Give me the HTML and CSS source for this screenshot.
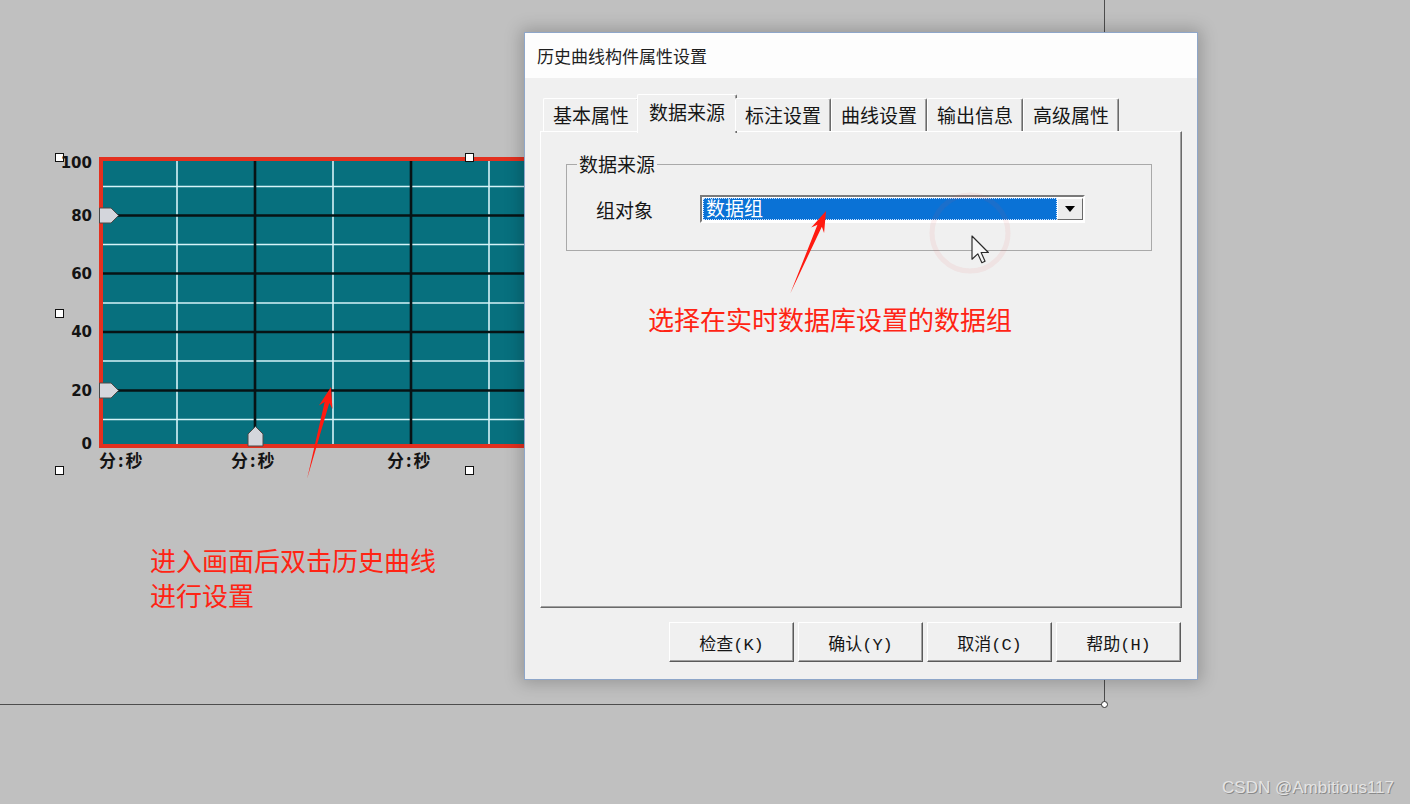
FILE: index.html
```html
<!DOCTYPE html>
<html lang="zh-CN">
<head>
<meta charset="utf-8">
<title>历史曲线构件属性设置</title>
<link rel="stylesheet" href="styles.css">
</head>
<body>
<div class="desktop">
  <div class="frame"></div>
  <div class="frame-knob"></div>

  <svg class="chart" width="540" height="500" viewBox="0 0 540 500">
    <rect x="101" y="159" width="500" height="287" fill="#07707e"/>
    <g stroke="#d6f3f8" stroke-width="1.6">
      <line x1="103" x2="540" y1="186.5" y2="186.5"/>
      <line x1="103" x2="540" y1="244.5" y2="244.5"/>
      <line x1="103" x2="540" y1="303" y2="303"/>
      <line x1="103" x2="540" y1="361" y2="361"/>
      <line x1="103" x2="540" y1="419.5" y2="419.5"/>
      <line x1="177" x2="177" y1="161" y2="444"/>
      <line x1="333" x2="333" y1="161" y2="444"/>
      <line x1="489" x2="489" y1="161" y2="444"/>
    </g>
    <g stroke="#071315" stroke-width="2.6">
      <line x1="103" x2="540" y1="215.5" y2="215.5"/>
      <line x1="103" x2="540" y1="273.5" y2="273.5"/>
      <line x1="103" x2="540" y1="332" y2="332"/>
      <line x1="103" x2="540" y1="390.5" y2="390.5"/>
      <line x1="255" x2="255" y1="161" y2="444"/>
      <line x1="411" x2="411" y1="161" y2="444"/>
    </g>
    <rect x="101" y="159" width="500" height="287" fill="none" stroke="#e3301f" stroke-width="4"/>
    <g fill="#d4d6dc" stroke="#4a4a4a" stroke-width="1">
      <polygon points="99.5,208 111,208 118.5,215.5 111,223 99.5,223"/>
      <polygon points="99.5,383 111,383 118.5,390.5 111,398 99.5,398"/>
      <polygon points="248,446 248,434 255.5,426.5 263,434 263,446"/>
    </g>
    <g fill="#fff" stroke="#111" stroke-width="1">
      <rect x="55.5" y="153.5" width="8" height="8"/>
      <rect x="465.5" y="153.5" width="8" height="8"/>
      <rect x="55.5" y="309.5" width="8" height="8"/>
      <rect x="55.5" y="466.5" width="8" height="8"/>
      <rect x="465.5" y="466.5" width="8" height="8"/>
    </g>
    <g class="ylabels" text-anchor="end">
      <text x="92" y="168">100</text>
      <text x="92" y="221">80</text>
      <text x="92" y="279">60</text>
      <text x="92" y="337">40</text>
      <text x="92" y="396">20</text>
      <text x="92" y="449">0</text>
    </g>
    <g class="xlabels">
      <text x="99" y="467">分:秒</text>
      <text x="231" y="467">分:秒</text>
      <text x="387" y="467">分:秒</text>
    </g>
  </svg>

  <div class="dialog">
    <div class="titlebar">历史曲线构件属性设置</div>
    <div class="dlg-body">
      <div class="tabs">
        <div class="tab">基本属性</div>
        <div class="tab active">数据来源</div>
        <div class="tab">标注设置</div>
        <div class="tab">曲线设置</div>
        <div class="tab">输出信息</div>
        <div class="tab">高级属性</div>
      </div>
      <div class="panel">
        <fieldset class="group">
          <legend>数据来源</legend>
          <div class="field-row">
            <span class="field-label">组对象</span>
            <div class="combo">
              <div class="combo-value">数据组</div>
              <div class="combo-btn">
                <svg width="10" height="6" viewBox="0 0 10 6"><polygon points="0,0 10,0 5,6" fill="#000"/></svg>
              </div>
            </div>
          </div>
        </fieldset>
      </div>
      <div class="buttons">
        <button class="btn">检查(K)</button>
        <button class="btn">确认(Y)</button>
        <button class="btn">取消(C)</button>
        <button class="btn">帮助(H)</button>
      </div>
    </div>
  </div>

  <div class="note note-left">进入画面后双击历史曲线<br>进行设置</div>
  <div class="note note-right">选择在实时数据库设置的数据组</div>

  <svg class="overlay" width="1410" height="804" viewBox="0 0 1410 804">
    <circle cx="970" cy="233" r="38" fill="none" stroke="rgba(235,80,80,0.08)" stroke-width="5"/>
    <g fill="#ff1a10">
      <polygon transform="translate(331,387) rotate(14.6)" points="0,0 7,21 2.4,16 0,95 -2.4,16 -7,21"/>
      <polygon transform="translate(826,211) rotate(23.4)" points="0,0 7,21 2.4,16 0,90 -2.4,16 -7,21"/>
    </g>
    <path transform="translate(972,236) scale(1.45)" d="M0,0 L0,16 L4,12.3 L6.8,18.4 L9,17.4 L6.3,11.4 L11.3,11.4 Z" fill="#f6f6f6" stroke="#2a2a2a" stroke-width="0.8" stroke-linejoin="round"/>
  </svg>

  <div class="watermark">CSDN @Ambitious117</div>
</div>
</body>
</html>
```

FILE: styles.css
```css
* { box-sizing: border-box; }

html, body {
  margin: 0;
  padding: 0;
}

body {
  width: 1410px;
  height: 804px;
  overflow: hidden;
  background: #c0c0c0;
  font-family: "Noto Sans CJK SC", "Liberation Sans", sans-serif;
}

.desktop {
  position: relative;
  width: 1410px;
  height: 804px;
  background: #c0c0c0;
}

.frame {
  position: absolute;
  left: -1px;
  top: -1px;
  width: 1106px;
  height: 706px;
  border-right: 1px solid #4d4d4d;
  border-bottom: 1px solid #4d4d4d;
}

.frame-knob {
  position: absolute;
  left: 1101px;
  top: 701px;
  width: 7px;
  height: 7px;
  border-radius: 50%;
  background: #fff;
  border: 1px solid #333;
}

.chart {
  position: absolute;
  left: 0;
  top: 0;
}

.ylabels text {
  font-family: "DejaVu Sans", sans-serif;
  font-weight: bold;
  font-size: 15px;
  fill: #141414;
}

.xlabels text {
  font-family: "Noto Sans CJK SC", sans-serif;
  font-weight: bold;
  font-size: 17px;
  letter-spacing: 2px;
  fill: #141414;
}

/* dialog */
.dialog {
  position: absolute;
  left: 524px;
  top: 32px;
  width: 674px;
  height: 648px;
  border: 1px solid #8ea6c9;
  box-shadow: 0 0 16px 3px rgba(0, 0, 0, 0.22);
  display: flex;
  flex-direction: column;
  background: #f0f0f0;
}

.titlebar {
  height: 45px;
  background: #fdfdfd;
  padding-left: 12px;
  font-size: 17px;
  line-height: 45px;
  color: #1e1e1e;
}

.dlg-body {
  flex: 1;
  display: flex;
  flex-direction: column;
  padding: 16px 15px 17px;
  background: #f0f0f0;
}

.tabs {
  position: relative;
  z-index: 1;
  display: flex;
  align-items: flex-end;
  height: 37px;
  padding-left: 3px;
}

.tab {
  height: 33px;
  padding: 0 9px;
  font-size: 19px;
  line-height: 31px;
  color: #161616;
  background: #f0f0f0;
  border-top: 1px solid #fff;
  border-left: 1px solid #fff;
  border-right: 1px solid #6a6a6a;
  box-shadow: inset -1px 0 #a0a0a0;
  border-radius: 2px 2px 0 0;
  white-space: nowrap;
}

.tab.active {
  height: 39px;
  margin: 0 -2px -2px;
  padding: 0 11px;
  line-height: 33px;
}

.panel {
  flex: 1;
  background: #f0f0f0;
  border: 1px solid;
  border-color: #fff #6a6a6a #6a6a6a #fff;
  box-shadow: inset -1px -1px #a0a0a0;
}

.group {
  margin: 22px 29px 0 25px;
  padding: 21px 0 27px 10px;
  border: 1px solid #a9a9a9;
  min-width: 0;
}

.group legend {
  padding: 0 2px;
  font-size: 19px;
  line-height: 20px;
  color: #161616;
}

.field-row {
  display: flex;
  align-items: center;
  margin-left: 19px;
  height: 28px;
}

.field-label {
  width: 104px;
  font-size: 19px;
  color: #161616;
}

.combo {
  width: 385px;
  height: 28px;
  display: flex;
  padding: 1px 0 1px 1px;
  background: #fff;
  border: 2px solid;
  border-color: #7a7a7a #fff #fff #7a7a7a;
}

.combo-value {
  flex: 1;
  background: #0a72d6;
  color: #fff;
  font-size: 19px;
  line-height: 20px;
  padding-left: 3px;
  outline: 1px dotted #cfe3ff;
  outline-offset: -1px;
}

.combo-btn {
  width: 26px;
  display: flex;
  align-items: center;
  justify-content: center;
  background: #ececec;
  border: 1px solid;
  border-color: #fff #6a6a6a #6a6a6a #fff;
}

.buttons {
  display: flex;
  justify-content: flex-end;
  gap: 4px;
  margin-top: 14px;
  padding-right: 1px;
}

.btn {
  width: 125px;
  height: 40px;
  padding: 0;
  background: #f0f0f0;
  border: 1px solid;
  border-color: #fff #5a5a5a #5a5a5a #fff;
  box-shadow: inset -1px -1px #a0a0a0;
  font-family: "Liberation Mono", "Noto Sans CJK SC", monospace;
  font-size: 17px;
  color: #161616;
}

/* annotations */
.note {
  position: absolute;
  color: #ff2414;
  font-size: 26px;
  line-height: 35px;
  white-space: nowrap;
}

.note-left {
  left: 150px;
  top: 542px;
}

.note-right {
  left: 648px;
  top: 301px;
}

.overlay {
  position: absolute;
  left: 0;
  top: 0;
  pointer-events: none;
}

.watermark {
  position: absolute;
  right: 16px;
  bottom: 6px;
  font-family: "Liberation Sans", sans-serif;
  font-size: 17px;
  color: #e4e4e4;
  text-shadow: 1px 1px 0 #8a8a8a;
}
```
